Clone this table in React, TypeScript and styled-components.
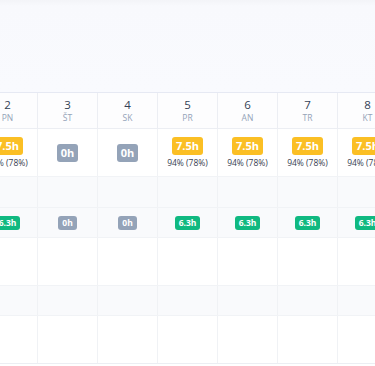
import React from "react";
import styled, { createGlobalStyle } from "styled-components";

const Global = createGlobalStyle`
  html, body { margin: 0; padding: 0; background: #ffffff; }
  body { font-family: "Open Sans", "Noto Sans", Arial, sans-serif; }
`;

const Page = styled.div`
  width: 375px;
  height: 366px;
  overflow: hidden;
  background: #ffffff;
`;

const TopArea = styled.div`
  height: 92px;
  background: linear-gradient(#f3f4f8 0px, #f8f9fd 6px, #f9fafe 100%);
`;

const Scroller = styled.div`
  overflow: hidden;
  width: 375px;
`;

const Table = styled.div`
  margin-left: -22px;
  width: 420px;
  display: flex;
  flex-direction: column;
`;

const Row = styled.div<{ $h: number; $bg?: string; $top?: string }>`
  display: flex;
  height: ${(p) => p.$h}px;
  background: ${(p) => p.$bg || "#ffffff"};
  border-top: 1px solid ${(p) => p.$top || "#f1f3f6"};
  box-sizing: border-box;
`;

const Cell = styled.div<{ $line?: string }>`
  width: 60px;
  flex: 0 0 60px;
  box-sizing: border-box;
  border-right: 1px solid ${(p) => p.$line || "#f0f2f5"};
  display: flex;
  flex-direction: column;
  align-items: center;
  justify-content: center;
`;

const DayNum = styled.div`
  font-size: 11.5px;
  line-height: 13px;
  font-weight: 500;
  color: #334155;
`;

const DayName = styled.div`
  font-size: 8.5px;
  line-height: 11px;
  font-weight: 500;
  color: #94a3b8;
  margin-top: 1px;
`;

const Badge = styled.div<{ $bg: string; $small?: boolean }>`
  background: ${(p) => p.$bg};
  color: #ffffff;
  font-weight: 700;
  font-size: ${(p) => (p.$small ? "8.5px" : "11px")};
  line-height: ${(p) => (p.$small ? "14px" : "18px")};
  height: ${(p) => (p.$small ? "14px" : "18px")};
  padding: 0 4px;
  border-radius: 3px;
`;

const Pct = styled.div`
  font-size: 8.5px;
  line-height: 11px;
  color: #374151;
  margin-top: 2px;
  white-space: nowrap;
`;

type Day = { n: number; d: string; work: boolean };
const days: Day[] = [
  { n: 2, d: "PN", work: true },
  { n: 3, d: "ŠT", work: false },
  { n: 4, d: "SK", work: false },
  { n: 5, d: "PR", work: true },
  { n: 6, d: "AN", work: true },
  { n: 7, d: "TR", work: true },
  { n: 8, d: "KT", work: true },
];

export default function App() {
  return (
    <Page>
      <Global />
      <TopArea />
      <Scroller>
        <Table>
          <Row $h={36} $bg="#fdfdfe" $top="#e6e9f3">
            {days.map((d) => (
              <Cell key={d.n} $line="#eceef3">
                <DayNum>{d.n}</DayNum>
                <DayName>{d.d}</DayName>
              </Cell>
            ))}
          </Row>
          <Row $h={48} $top="#eceef3">
            {days.map((d) => (
              <Cell key={d.n}>
                {d.work ? (
                  <>
                    <Badge $bg="#fbbf24">7.5h</Badge>
                    <Pct>94% (78%)</Pct>
                  </>
                ) : (
                  <Badge $bg="#94a3b8">0h</Badge>
                )}
              </Cell>
            ))}
          </Row>
          <Row $h={31} $bg="#f9fafc">
            {days.map((d) => (
              <Cell key={d.n} />
            ))}
          </Row>
          <Row $h={30} $bg="#f9fafc">
            {days.map((d) => (
              <Cell key={d.n}>
                <Badge $small $bg={d.work ? "#10b981" : "#94a3b8"}>
                  {d.work ? "6.3h" : "0h"}
                </Badge>
              </Cell>
            ))}
          </Row>
          <Row $h={48}>
            {days.map((d) => (
              <Cell key={d.n} />
            ))}
          </Row>
          <Row $h={30} $bg="#f9fafc">
            {days.map((d) => (
              <Cell key={d.n} />
            ))}
          </Row>
          <Row $h={48}>
            {days.map((d) => (
              <Cell key={d.n} />
            ))}
          </Row>
          <Row $h={1} $top="#eceef3" />
        </Table>
      </Scroller>
    </Page>
  );
}
